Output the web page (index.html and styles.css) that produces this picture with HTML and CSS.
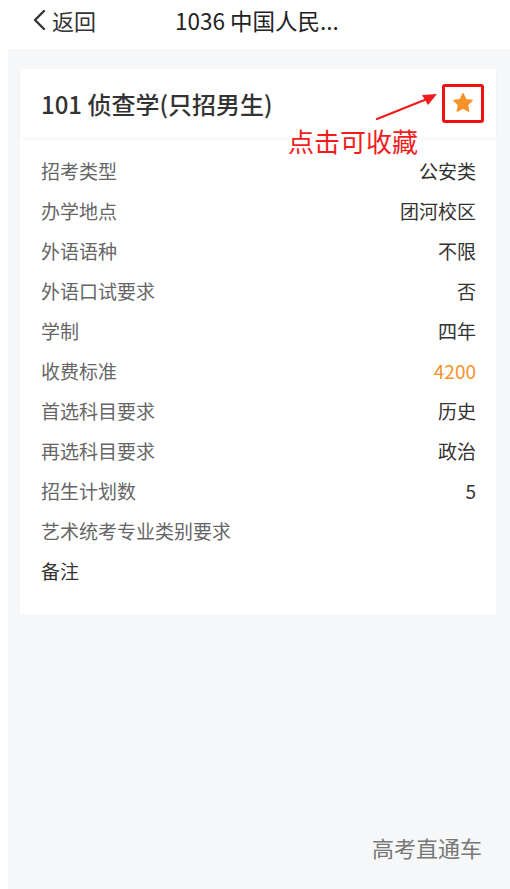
FILE: index.html
```html
<!DOCTYPE html>
<html lang="zh-CN">

<head>
    <meta charset="UTF-8">
    <meta name="viewport" content="width=device-width, initial-scale=1.0">
    <title>1036 中国人民公安大学</title>
    <link rel="stylesheet" href="styles.css">
</head>

<body>
    <header class="nav-bar">
        <a class="back" href="#">
            <svg class="back-icon" width="14" height="22" viewBox="0 0 14 22">
                <path d="M12 2 L3 11 L12 20" fill="none" stroke="#333" stroke-width="2.4" stroke-linecap="round" stroke-linejoin="round" />
            </svg>
            <span>返回</span>
        </a>
        <div class="nav-title">1036 中国人民...</div>
    </header>

    <main class="page">
        <section class="card">
            <div class="card-head">
                <h1 class="major-name">101 侦查学(只招男生)</h1>
                <button class="fav-btn" title="收藏">
                    <svg width="22" height="22" viewBox="0 0 24 24">
                        <path d="M12 1.8 L15.1 8.2 L22.1 9.1 L17 14 L18.3 21 L12 17.6 L5.7 21 L7 14 L1.9 9.1 L8.9 8.2 Z" fill="#f7922a" stroke="#f7922a" stroke-width="1.4" stroke-linejoin="round" />
                    </svg>
                </button>

                <!-- 提示：点击可收藏 -->
                <div class="hint">
                    <svg class="hint-arrow" width="64" height="32" viewBox="0 0 64 32">
                        <path d="M2 29 L52 9" stroke="#f21c1c" stroke-width="2.2" stroke-linecap="round" />
                        <path d="M62 4 L47 5 L53 15 Z" fill="#f21c1c" />
                    </svg>
                    <span class="hint-text">点击可收藏</span>
                </div>
            </div>

            <ul class="info-list">
                <li><span class="label">招考类型</span><span class="value">公安类</span></li>
                <li><span class="label">办学地点</span><span class="value">团河校区</span></li>
                <li><span class="label">外语语种</span><span class="value">不限</span></li>
                <li><span class="label">外语口试要求</span><span class="value">否</span></li>
                <li><span class="label">学制</span><span class="value">四年</span></li>
                <li><span class="label">收费标准</span><span class="value price">4200</span></li>
                <li><span class="label">首选科目要求</span><span class="value">历史</span></li>
                <li><span class="label">再选科目要求</span><span class="value">政治</span></li>
                <li><span class="label">招生计划数</span><span class="value">5</span></li>
                <li><span class="label">艺术统考专业类别要求</span><span class="value"></span></li>
                <li><span class="label dark">备注</span><span class="value"></span></li>
            </ul>
        </section>

        <div class="watermark">高考直通车</div>
    </main>
</body>

</html>
```

FILE: styles.css
```css
* {
    box-sizing: border-box;
}

html,
body {
    margin: 0;
    height: 100%;
}

body {
    background-color: #fff;
    font-family: "Noto Sans CJK SC", "Noto Sans", sans-serif;
    color: #333;
    display: flex;
    flex-direction: column;
}

/* 顶部导航 */
.nav-bar {
    height: 49px;
    flex-shrink: 0;
    display: flex;
    align-items: center;
    position: relative;
    padding-left: 32px;
}

.back {
    display: flex;
    align-items: center;
    gap: 6px;
    color: #333;
    text-decoration: none;
    font-size: 22px;
    position: relative;
    top: -5px;
}

.nav-title {
    position: absolute;
    left: 175px;
    top: 4px;
    font-size: 22.5px;
    color: #222;
}

/* 灰色内容区 */
.page {
    flex: 1;
    margin-left: 8px;
    background-color: #f6f7f9;
    padding: 20px 14px 0 12px;
    display: flex;
    flex-direction: column;
}

.card {
    background-color: #fff;
}

.card-head {
    height: 68px;
    display: flex;
    align-items: center;
    justify-content: space-between;
    padding: 0 12px 0 21px;
    position: relative;
    box-shadow: 0 2px 4px rgba(0, 0, 0, 0.04);
}

.major-name {
    margin: 0;
    font-size: 24px;
    font-weight: 500;
    color: #333;
}

.fav-btn {
    width: 42px;
    height: 39px;
    border: 3px solid #f01010;
    border-radius: 3px;
    background: #fff;
    display: flex;
    align-items: center;
    justify-content: center;
    padding: 0;
    cursor: pointer;
}

.hint {
    position: absolute;
    left: 268px;
    top: 21px;
}

.hint-arrow {
    position: absolute;
    left: 87px;
    top: 0;
}

.hint-text {
    position: absolute;
    left: 0;
    top: 38px;
    white-space: nowrap;
    font-size: 26px;
    color: #f21c1c;
    line-height: 1;
}

/* 信息列表 */
.info-list {
    list-style: none;
    margin: 0;
    padding: 13px 20px 24px 21px;
}

.info-list li {
    height: 40px;
    display: flex;
    align-items: center;
    justify-content: space-between;
    font-size: 19px;
}

.label {
    color: #666;
}

.label.dark {
    color: #333;
}

.value {
    color: #333;
}

.value.price {
    color: #f7922a;
}

.watermark {
    margin-top: auto;
    align-self: flex-end;
    margin-bottom: 26px;
    margin-right: 14px;
    font-size: 22px;
    color: #777;
}
```
